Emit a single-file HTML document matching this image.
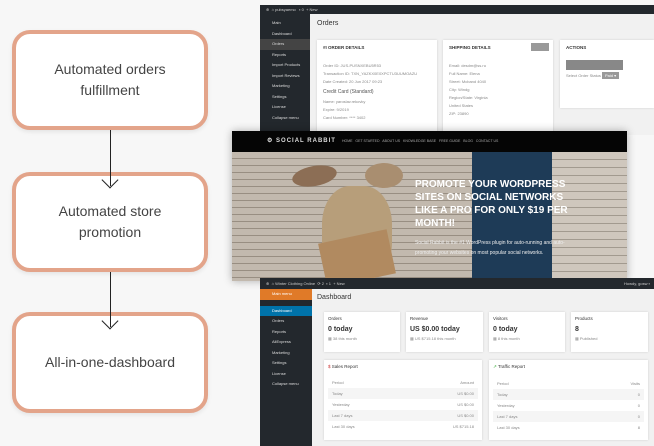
<!DOCTYPE html>
<html><head><meta charset="utf-8"><style>
*{box-sizing:border-box;margin:0;padding:0}
body{width:654px;height:446px;overflow:hidden;background:#f7f7f7;font-family:"Liberation Sans",sans-serif;position:relative}
.box{position:absolute;left:12px;width:196px;border:4px solid #e3a48a;border-radius:18px;background:#fff;display:flex;align-items:center;justify-content:center;text-align:center;font-size:14px;color:#444;line-height:21px;box-shadow:0 2px 4px rgba(0,0,0,.08)}
.arr{position:absolute;left:110px;width:1px;background:#222;z-index:2}
.chev{position:absolute;left:104px;width:12px;height:12px;border-right:1.3px solid #222;border-bottom:1.3px solid #222;transform:rotate(45deg);z-index:2}
.abs{position:absolute}
.bar{background:#23282d}
.side{background:#23282d;color:#ddd;font-size:4px}
.side div{height:10.5px;line-height:10.5px;padding-left:12px}
.card{background:#fff;position:absolute;box-shadow:0 0 2px rgba(0,0,0,.15)}
.t{font-size:4px;color:#888;line-height:8px}
</style></head><body>

<div class="box" style="top:30px;height:100px">Automated orders<br>fulfillment</div>
<div class="arr" style="top:130px;height:56px"></div><div class="chev" style="top:174px"></div>
<div class="box" style="top:172px;height:100px">Automated store<br>promotion</div>
<div class="arr" style="top:272px;height:55px"></div><div class="chev" style="top:315px"></div>
<div class="box" style="top:312px;height:101px">All-in-one-dashboard</div>

<!-- screenshot 1 -->
<div class="abs" style="left:260px;top:5px;width:394px;height:130px;background:#f1f1f1">
 <div class="bar abs" style="left:0;top:0;width:394px;height:9px;color:#ccc;font-size:4px;line-height:9px;padding-left:6px">⊕ &nbsp;⌂ pubsyaemo &nbsp; ▪ 0 &nbsp;+ New</div>
 <div class="side abs" style="left:0;top:9px;width:50px;height:121px;padding-top:4px">
  <div>Main</div><div>Dashboard</div><div style="background:#444">Orders</div><div>Reports</div><div>Import Products</div><div>Import Reviews</div><div>Marketing</div><div>Settings</div><div>License</div><div>Collapse menu</div>
 </div>
 <div class="abs" style="left:57px;top:15px;font-size:7px;color:#333">Orders</div>
 <div class="card" style="left:57px;top:35px;width:120px;height:100px;padding:5px 6px"><div style="font-size:4.5px;font-weight:bold;color:#333">#I ORDER DETAILS</div><div class="t" style="margin-top:12px">Order ID: JUS-PUSNXEBU5R53<br>Transaction ID: TXN_YAZKX0E0XPCTU3UUMOAZU<br>Date Created: 20 Jun 2017 09:23</div><div style="font-size:5px;color:#555;margin:3px 0">Credit Card (Standard)</div><div class="t">Name: yaroslav.rekovky<br>Expire: 9/2019<br>Card Number: **** 3402</div></div>
 <div class="card" style="left:183px;top:35px;width:110px;height:100px;padding:5px 6px"><div style="font-size:4.5px;font-weight:bold;color:#333">SHIPPING DETAILS</div><div class="abs" style="right:4px;top:3px;width:18px;height:8px;background:#999"></div><div class="t" style="margin-top:12px">Email: desdm@ss.ru<br>Full Name: Elena<br>Street: Mcband 4040<br>City: Windg<br>Region/State: Virginia<br>United States<br>ZIP: 23890</div></div>
 <div class="card" style="left:300px;top:35px;width:94px;height:68px;padding:5px 6px"><div style="font-size:4.5px;font-weight:bold;color:#333">ACTIONS</div><div style="margin-top:10px;width:57px;height:10px;background:#888"></div><div class="t" style="margin-top:2px">Select Order Status <span style="background:#999;color:#fff;padding:1px 3px">Paid ▾</span></div></div>
</div>

<!-- screenshot 2 -->
<div class="abs" style="left:232px;top:131px;width:395px;height:150px;box-shadow:0 0 8px rgba(0,0,0,.3);overflow:hidden;background:#a89c8e">
 <div class="abs" style="left:0;top:0;width:395px;height:21px;background:#050505;color:#aaa;font-size:3.5px;line-height:21px">
  <span style="position:absolute;left:35px;font-size:6px;color:#ddd;font-weight:bold;letter-spacing:1px">⚙ SOCIAL RABBIT</span>
  <span style="position:absolute;left:110px">HOME &nbsp; GET STARTED &nbsp; ABOUT US &nbsp; KNOWLEDGE BASE &nbsp; FREE GUIDE &nbsp; BLOG &nbsp; CONTACT US</span></div>
 <div class="abs" style="left:0;top:21px;width:395px;height:129px;background:repeating-linear-gradient(180deg,#c2b9ae 0 6px,#988e82 6px 7px)"></div>
 <div class="abs" style="left:240px;top:21px;width:80px;height:129px;background:#1e3b57"></div>
 <div class="abs" style="left:320px;top:21px;width:75px;height:129px;background:repeating-linear-gradient(180deg,#cfc7bd 0 7px,#a29a8f 7px 8px)"></div>
 <div class="abs" style="left:90px;top:55px;width:70px;height:95px;border-radius:40%;background:#b79e7a"></div>
 <div class="abs" style="left:60px;top:35px;width:45px;height:20px;border-radius:50%;background:#8c6e55;transform:rotate(-10deg)"></div>
 <div class="abs" style="left:133px;top:32px;width:38px;height:25px;border-radius:50%;background:#a98e70"></div>
 <div class="abs" style="left:90px;top:105px;width:70px;height:45px;background:#b18a60;transform:rotate(-12deg)"></div>
 <div class="abs" style="left:183px;top:47px;color:#fff;font-weight:bold;font-size:10px;line-height:13px;width:155px">PROMOTE YOUR WORDPRESS SITES ON SOCIAL NETWORKS LIKE A PRO FOR ONLY $19 PER MONTH!</div>
 <div class="abs" style="left:183px;top:107px;color:#eee;font-size:5px;line-height:10px;width:170px">Social Rabbit is the #1 WordPress plugin for auto-running and auto-promoting your websites on most popular social networks.</div>
</div>

<!-- screenshot 3 -->
<div class="abs" style="left:260px;top:278px;width:394px;height:168px;background:#f1f1f1">
 <div class="bar abs" style="left:0;top:0;width:394px;height:11px;color:#ccc;font-size:4px;line-height:11px;padding-left:6px">⊕ &nbsp;⌂ Winter Clothing Online &nbsp;⟳ 2 &nbsp;▪ 1 &nbsp;+ New<span style="position:absolute;right:4px">Howdy, gosw ▪</span></div>
 <div class="side abs" style="left:0;top:11px;width:52px;height:157px">
  <div style="background:#e07a28;color:#fff">Main menu</div><div style="height:6px"></div>
  <div style="background:#0073aa;color:#fff">Dashboard</div><div>Orders</div><div>Reports</div><div>AliExpress</div><div>Marketing</div><div>Settings</div><div>License</div><div>Collapse menu</div>
 </div>
 <div class="abs" style="left:57px;top:16px;font-size:7px;color:#333">Dashboard</div>
 <div class="card" style="left:64px;top:34px;width:76px;height:40px;padding:4px"><div style="font-size:4.5px;color:#333">Orders</div><div style="font-size:7px;font-weight:bold;color:#333;margin-top:5px">0 today</div><div class="t" style="margin-top:2px">▦ 38 this month</div></div>
 <div class="card" style="left:146px;top:34px;width:77px;height:40px;padding:4px"><div style="font-size:4.5px;color:#333">Revenue</div><div style="font-size:7px;font-weight:bold;color:#333;margin-top:5px">US $0.00 today</div><div class="t" style="margin-top:2px">▦ US $715.18 this month</div></div>
 <div class="card" style="left:229px;top:34px;width:76px;height:40px;padding:4px"><div style="font-size:4.5px;color:#333">Visitors</div><div style="font-size:7px;font-weight:bold;color:#333;margin-top:5px">0 today</div><div class="t" style="margin-top:2px">▦ 8 this month</div></div>
 <div class="card" style="left:311px;top:34px;width:77px;height:40px;padding:4px"><div style="font-size:4.5px;color:#333">Products</div><div style="font-size:7px;font-weight:bold;color:#333;margin-top:5px">8</div><div class="t" style="margin-top:2px">▦ Published</div></div>
 <div class="card" style="left:64px;top:82px;width:158px;height:80px;padding:4px"><div style="font-size:4.5px;color:#333"><span style="color:#c33">$</span> Sales Report</div>
  <div class="t" style="margin-top:8px;line-height:11px">
   <div style="display:flex;justify-content:space-between;padding:0 4px"><span>Period</span><span>Amount</span></div>
   <div style="display:flex;justify-content:space-between;padding:0 4px;background:#f5f5f5"><span>Today</span><span>US $0.00</span></div>
   <div style="display:flex;justify-content:space-between;padding:0 4px"><span>Yesterday</span><span>US $0.00</span></div>
   <div style="display:flex;justify-content:space-between;padding:0 4px;background:#f5f5f5"><span>Last 7 days</span><span>US $0.00</span></div>
   <div style="display:flex;justify-content:space-between;padding:0 4px"><span>Last 30 days</span><span>US $715.18</span></div></div></div>
 <div class="card" style="left:229px;top:82px;width:159px;height:80px;padding:4px"><div style="font-size:4.5px;color:#333"><span style="color:#3a3">↗</span> Traffic Report</div>
  <div class="t" style="margin-top:8px;line-height:11px">
   <div style="display:flex;justify-content:space-between;padding:0 4px"><span>Period</span><span>Visits</span></div>
   <div style="display:flex;justify-content:space-between;padding:0 4px;background:#f5f5f5"><span>Today</span><span>0</span></div>
   <div style="display:flex;justify-content:space-between;padding:0 4px"><span>Yesterday</span><span>0</span></div>
   <div style="display:flex;justify-content:space-between;padding:0 4px;background:#f5f5f5"><span>Last 7 days</span><span>0</span></div>
   <div style="display:flex;justify-content:space-between;padding:0 4px"><span>Last 30 days</span><span>8</span></div></div></div>
</div>
</body></html>
